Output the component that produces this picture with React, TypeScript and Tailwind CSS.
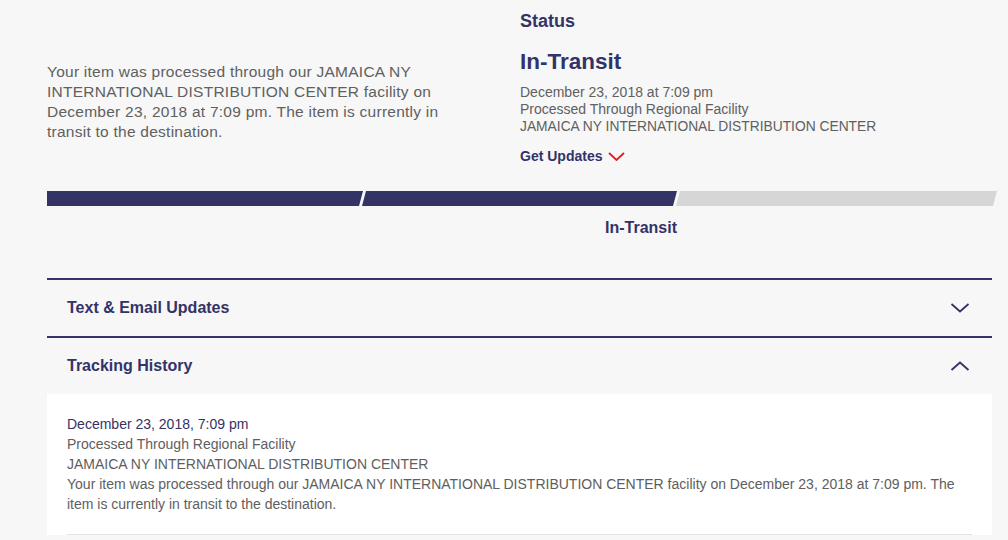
import React from 'react';

const navy = '#333366';

const Chevron: React.FC<{ up?: boolean }> = ({ up }) => (
  <svg width="20" height="10" viewBox="0 0 20 10" fill="none" stroke={navy} strokeWidth="1.8">
    {up ? <polyline points="1.5,9 10,1.5 18.5,9" /> : <polyline points="1.5,1 10,8.5 18.5,1" />}
  </svg>
);

const ProgressBar: React.FC = () => (
  <svg width="950" height="15" viewBox="0 0 950 15" className="block">
    <polygon points="0,0 316,0 312,15 0,15" fill="#333366" />
    <polygon points="319,0 630,0 626,15 315,15" fill="#333366" />
    <polygon points="633,0 950,0 946,15 629,15" fill="#d6d6d6" />
  </svg>
);

const App: React.FC = () => {
  return (
    <div className="min-h-screen w-full bg-[#f7f7f7] font-['Liberation_Sans',Arial,sans-serif] overflow-hidden">
      {/* Summary */}
      <div className="flex">
        <div className="w-[520px] shrink-0 pl-[47px] pt-[62px]">
          <p className="w-[415px] text-[15.5px] leading-[20px] tracking-[0.25px] text-[#606060]">
            Your item was processed through our JAMAICA NY INTERNATIONAL DISTRIBUTION CENTER facility on December 23, 2018 at 7:09 pm. The item is currently in transit to the destination.
          </p>
        </div>
        <div className="pt-[11px]">
          <h3 className="text-[18px] leading-[20px] font-bold text-[#333366]">Status</h3>
          <h2 className="mt-[17px] text-[22.5px] leading-[28px] font-bold text-[#333366]">In-Transit</h2>
          <div className="mt-[8px] text-[14px] leading-[17px] text-[#606060]">
            <p>December 23, 2018 at 7:09 pm</p>
            <p>Processed Through Regional Facility</p>
            <p className="text-[13.8px]">JAMAICA NY INTERNATIONAL DISTRIBUTION CENTER</p>
          </div>
          <div className="mt-[13px] flex items-center gap-[6px]">
            <span className="text-[14px] leading-[17px] font-bold text-[#333366]">Get Updates</span>
            <svg width="17" height="9" viewBox="0 0 17 9" fill="none" stroke="#e71921" strokeWidth="1.8">
              <polyline points="1,1 8.5,8 16,1" />
            </svg>
          </div>
        </div>
      </div>

      {/* Progress */}
      <div className="pl-[47px] mt-[26px]">
        <ProgressBar />
        <div className="w-[630px] mt-[12px] text-right text-[16px] leading-[20px] font-bold text-[#333366]">
          In-Transit
        </div>
      </div>

      {/* Accordions */}
      <div className="mx-[47px] w-[945px] mt-[40px]">
        <div className="border-t-2 border-[#333366] h-[58px] flex items-center justify-between pl-5 pr-[22px]">
          <span className="text-[16px] leading-[20px] font-bold text-[#333366]">Text &amp; Email Updates</span>
          <Chevron />
        </div>
        <div className="border-t-2 border-[#333366] h-[58px] flex items-center justify-between pl-5 pr-[22px]">
          <span className="text-[16px] leading-[20px] font-bold text-[#333366]">Tracking History</span>
          <Chevron up />
        </div>
        <div className="bg-white px-5 pt-5">
          <div className="pb-5 border-b border-[#e3e3e3] text-[14px] leading-[20px]">
            <p className="text-[#333366]">December 23, 2018, 7:09 pm</p>
            <p className="text-[#5e5e5e]">Processed Through Regional Facility</p>
            <p className="text-[#5e5e5e]">JAMAICA NY INTERNATIONAL DISTRIBUTION CENTER</p>
            <p className="text-[#5e5e5e]">
              Your item was processed through our JAMAICA NY INTERNATIONAL DISTRIBUTION CENTER facility on December 23, 2018 at 7:09 pm. The item is currently in transit to the destination.
            </p>
          </div>
        </div>
      </div>
    </div>
  );
};

export default App;
